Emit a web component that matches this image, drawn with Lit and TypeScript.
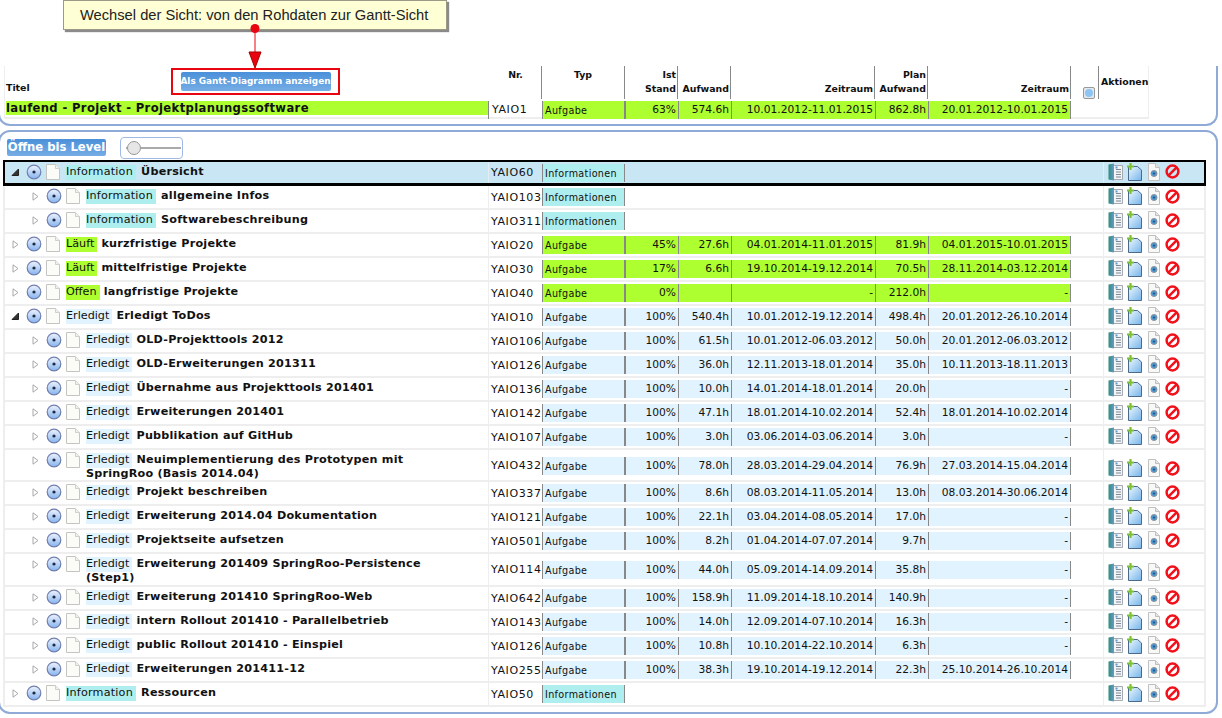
import { LitElement, html, css, svg } from 'lit';
import { customElement } from 'lit/decorators.js';

type Row = {
  lvl: number;
  open?: boolean;
  state: string;
  kind: 'info' | 'run' | 'done';
  title: string;
  nr: string;
  type: string;
  vals?: string[];
  sel?: boolean;
  h?: string;
};

const done = (title: string, nr: string, vals: string[], h = ''): Row => ({
  lvl: 1, state: 'Erledigt', kind: 'done', title, nr, type: 'Aufgabe', vals, h,
});

const rows: Row[] = [
  { lvl: 0, open: true, state: 'Information', kind: 'info', title: 'Übersicht', nr: 'YAIO60', type: 'Informationen', sel: true },
  { lvl: 1, state: 'Information', kind: 'info', title: 'allgemeine Infos', nr: 'YAIO103', type: 'Informationen' },
  { lvl: 1, state: 'Information', kind: 'info', title: 'Softwarebeschreibung', nr: 'YAIO311', type: 'Informationen' },
  { lvl: 0, state: 'Läuft', kind: 'run', title: 'kurzfristige Projekte', nr: 'YAIO20', type: 'Aufgabe', vals: ['45%', '27.6h', '04.01.2014-11.01.2015', '81.9h', '04.01.2015-10.01.2015'] },
  { lvl: 0, state: 'Läuft', kind: 'run', title: 'mittelfristige Projekte', nr: 'YAIO30', type: 'Aufgabe', vals: ['17%', '6.6h', '19.10.2014-19.12.2014', '70.5h', '28.11.2014-03.12.2014'] },
  { lvl: 0, state: 'Offen', kind: 'run', title: 'langfristige Projekte', nr: 'YAIO40', type: 'Aufgabe', vals: ['0%', '', '-', '212.0h', '-'] },
  { lvl: 0, open: true, state: 'Erledigt', kind: 'done', title: 'Erledigt ToDos', nr: 'YAIO10', type: 'Aufgabe', vals: ['100%', '540.4h', '10.01.2012-19.12.2014', '498.4h', '20.01.2012-26.10.2014'] },
  done('OLD-Projekttools 2012', 'YAIO106', ['100%', '61.5h', '10.01.2012-06.03.2012', '50.0h', '20.01.2012-06.03.2012']),
  done('OLD-Erweiterungen 201311', 'YAIO126', ['100%', '36.0h', '12.11.2013-18.01.2014', '35.0h', '10.11.2013-18.11.2013']),
  done('Übernahme aus Projekttools 201401', 'YAIO136', ['100%', '10.0h', '14.01.2014-18.01.2014', '20.0h', '-']),
  done('Erweiterungen 201401', 'YAIO142', ['100%', '47.1h', '18.01.2014-10.02.2014', '52.4h', '18.01.2014-10.02.2014']),
  done('Pubblikation auf GitHub', 'YAIO107', ['100%', '3.0h', '03.06.2014-03.06.2014', '3.0h', '-']),
  done('Neuimplementierung des Prototypen mit SpringRoo (Basis 2014.04)', 'YAIO432', ['100%', '78.0h', '28.03.2014-29.04.2014', '76.9h', '27.03.2014-15.04.2014'], 'tall'),
  done('Projekt beschreiben', 'YAIO337', ['100%', '8.6h', '08.03.2014-11.05.2014', '13.0h', '08.03.2014-30.06.2014']),
  done('Erweiterung 2014.04 Dokumentation', 'YAIO121', ['100%', '22.1h', '03.04.2014-08.05.2014', '17.0h', '-']),
  done('Projektseite aufsetzen', 'YAIO501', ['100%', '8.2h', '01.04.2014-07.07.2014', '9.7h', '-']),
  done('Erweiterung 201409 SpringRoo-Persistence (Step1)', 'YAIO114', ['100%', '44.0h', '05.09.2014-14.09.2014', '35.8h', '-'], 'taller'),
  done('Erweiterung 201410 SpringRoo-Web', 'YAIO642', ['100%', '158.9h', '11.09.2014-18.10.2014', '140.9h', '-']),
  done('intern Rollout 201410 - Parallelbetrieb', 'YAIO143', ['100%', '14.0h', '12.09.2014-07.10.2014', '16.3h', '-']),
  done('public Rollout 201410 - Einspiel', 'YAIO126', ['100%', '10.8h', '10.10.2014-22.10.2014', '6.3h', '-']),
  done('Erweiterungen 201411-12', 'YAIO255', ['100%', '38.3h', '19.10.2014-19.12.2014', '22.3h', '25.10.2014-26.10.2014']),
  { lvl: 0, state: 'Information', kind: 'info', title: 'Ressourcen', nr: 'YAIO50', type: 'Informationen' },
];

const defs = svg`
  <linearGradient id="rad" x1="0" y1="0" x2="0" y2="1">
    <stop offset="0" stop-color="#eef3fc"/><stop offset="1" stop-color="#86b4f0"/>
  </linearGradient>
  <linearGradient id="nw" x1="0" y1="0" x2="1" y2="1">
    <stop offset="0" stop-color="#eef7fe"/><stop offset="1" stop-color="#74b4ea"/>
  </linearGradient>
  <linearGradient id="spine" x1="0" y1="0" x2="1" y2="0">
    <stop offset="0" stop-color="#2f8f7e"/><stop offset="1" stop-color="#6a98c8"/>
  </linearGradient>`;

const triangle = (open?: boolean) => open
  ? html`<svg class="tri" viewBox="0 0 9 9"><path d="M1 7.5 7.5 7.5 7.5 1Z" fill="#333" stroke="#222"/></svg>`
  : html`<svg class="tri" viewBox="0 0 9 9"><path d="M2 .8 7 4.5 2 8.2Z" fill="#fff" stroke="#a8a8a8"/></svg>`;

const radio = html`<svg class="radio" viewBox="0 0 16 16">
  <defs>${defs}</defs>
  <circle cx="8" cy="8" r="6.8" fill="url(#rad)" stroke="#6f7fae" stroke-width="1.2"/>
  <circle cx="8" cy="8" r="1.6" fill="#1c2a44"/>
</svg>`;

const page = html`<svg class="page" viewBox="0 0 14 16">
  <path d="M.5.5H9.5L13.5 4.5V15.5H.5Z" fill="#fbfbf7" stroke="#c4c4c0"/>
  <path d="M9.5.5V4.5H13.5" fill="#f0f0ec" stroke="#d0d0cc"/>
</svg>`;

const actions = html`<div class="acts">
  <svg width="15" height="18" viewBox="0 0 15 18">
    <defs>${defs}</defs>
    <path d="M5 2.5H14.5V16.5H5Z" fill="#f2f4f6" stroke="#a4aab0"/>
    <path d="M.5 1.5 6 .5V17.5L.5 16.5Z" fill="url(#spine)"/>
    <path d="M8 6.5h5M8 9h5M8 11.5h5M8 14h5" stroke="#7d8894"/>
    <rect x="7.5" y="3.5" width="2" height="2" fill="#5b9bd8"/>
  </svg>
  <svg width="15" height="18" viewBox="0 0 15 18">
    <defs>${defs}</defs>
    <path d="M1.5 3.5H10.5L14.5 7V17.5H1.5Z" fill="url(#nw)" stroke="#4a6a8c"/>
    <path d="M3.5 0V7M0 3.5H7" stroke="#7dc230" stroke-width="2.2"/>
  </svg>
  <svg width="12" height="18" viewBox="0 0 12 18">
    <path d="M.5.5H7.5L11.5 4.5V17.5H.5Z" fill="#f8f8f6" stroke="#c0c0c0"/>
    <path d="M7.5.5V4.5H11.5" fill="#e4e4e4" stroke="#c0c0c0"/>
    <circle cx="6" cy="10.5" r="3" fill="#4a96d4" stroke="#8a929a"/>
    <circle cx="6" cy="10.5" r="1" fill="#1d4f7c"/>
  </svg>
  <svg width="15" height="15" viewBox="0 0 15 15" class="stop">
    <circle cx="7.5" cy="7.5" r="5.9" fill="none" stroke="#f2101a" stroke-width="2.5"/>
    <path d="M3.4 11.6 11.6 3.4" stroke="#f2101a" stroke-width="2.5"/>
  </svg>
</div>`;

@customElement('app-root')
class AppRoot extends LitElement {
  static styles = css`
    :host {
      display: block;
      position: relative;
      width: 1222px;
      height: 718px;
      background: #fff;
      font-family: 'DejaVu Sans', Verdana, sans-serif;
      font-size: 10.7px;
      color: #111;
      overflow: hidden;
    }
    .panel {
      box-sizing: border-box;
      width: 1220px;
      margin-left: -2px;
      border: 2px solid #8faad6;
      background: #fff;
    }
    .top {
      height: 60px;
      margin-top: 66px;
      padding: 0 0 0 4px;
      border-top: 0;
      border-radius: 0 0 12px 12px;
      margin-bottom: 4px;
    }
    .main {
      height: 584px;
      padding: 0 0 0 4px;
      border-radius: 12px;
    }
    .sumbox {
      box-sizing: border-box;
      width: 1145px;
      height: 53px;
      border: solid #eee;
      border-width: 0 1px 2px 1px;
    }
    .grid {
      display: grid;
      grid-template-columns: 483px 54px 83px 53px 53px 144px 53px 143px 28px 48px;
    }
    .head {
      height: 30px;
      font-weight: bold;
      font-size: 9.4px;
      line-height: 14px;
      margin-bottom: 5px;
    }
    .hc {
      box-sizing: border-box;
      padding: 0 1px 3px 0;
      text-align: right;
      border-right: 1px solid #888;
      display: flex;
      flex-direction: column;
      justify-content: flex-end;
    }
    .hc.title {
      position: relative;
      text-align: left;
      padding: 0 0 4px 1px;
      border-right: 0;
    }
    .hc.hnr { justify-content: flex-start; text-align: center; padding: 2px 0 0 2px; }
    .hc.htype { justify-content: flex-start; text-align: center; padding: 2px 0 0; }
    .hc.minus { height: 33px; padding: 0 0 0 12px; }
    .hc.aktionen { border-right: 0; text-align: left; padding: 9px 0 0 2px; justify-content: flex-start; }
    .gantt {
      position: absolute;
      left: 166px;
      top: 2px;
      width: 169px;
      height: 27px;
      box-sizing: border-box;
      border: 2px solid #e8050f;
      display: flex;
      align-items: center;
      justify-content: center;
    }
    .btn {
      display: block;
      color: #fff;
      font-weight: bold;
      border-radius: 2px;
      background: linear-gradient(#4a90d9, #76ade5);
      white-space: nowrap;
    }
    .gantt .btn { font-size: 8.9px; line-height: 19px; width: 150px; text-align: center; }
    .minus-ic {
      width: 12px;
      height: 12px;
      box-sizing: border-box;
      border: 1px solid #999;
      border-radius: 2px;
      background: #e4e8ec;
      display: flex;
      align-items: center;
      justify-content: center;
    }
    .minus-ic i { display: block; height: 8px; width: 8px; border-radius: 50%; background: #8cc4f4; }
    .sumtitle {
      background: #adff2f;
      height: 14px;
      margin-left: 1px;
      font-weight: bold;
      font-size: 11.6px;
      line-height: 14px;
      letter-spacing: .36px;
      white-space: nowrap;
    }
    .sum .nr { border-left: 1px solid #888; padding-left: 3px; padding-bottom: 1px; }

    .toolbar {
      height: 28px;
      box-sizing: border-box;
      display: flex;
      align-items: center;
      padding: 3px 0 0 3px;
    }
    .toolbar .btn { font-size: 11.6px; line-height: 17px; width: 99px; text-align: center; }
    .slider {
      box-sizing: border-box;
      width: 63px;
      height: 22px;
      margin-left: 14px;
      border: 1px solid #9fbbe3;
      border-radius: 4px;
      display: flex;
      align-items: center;
      padding-left: 5px;
      position: relative;
    }
    .slider::before { content: ''; flex: 1; height: 2px; background: #aaa; margin-right: 1px; }
    .slider i {
      position: absolute;
      left: 6px;
      top: 3px;
      width: 14px;
      height: 14px;
      box-sizing: border-box;
      border-radius: 50%;
      border: 1px solid #999;
      background: #e6e6e6;
    }

    .row {
      box-sizing: border-box;
      height: 24px;
      margin-left: -1px;
      border-bottom: 2px solid #eee;
      border-left: 2px solid #eee;
      border-right: 2px solid #eee;
      width: 1203px;
      grid-template-columns: 483px 54px 83px 53px 53px 144px 53px 143px 32px 99px;
    }
    .row.tall { height: 32px; }
    .row.taller { height: 33px; }
    .row.sel {
      height: 26px;
      background: #c9e6f4;
      border: 2px solid #000;
      border-bottom-width: 3px;
    }
    .t {
      display: flex;
      align-items: flex-start;
      padding: 3px 25px 0 0;
      line-height: 14px;
    }
    .ctl { display: flex; align-items: flex-start; flex: none; margin-top: -2px; box-sizing: border-box; }
    .lvl0 .ctl { width: 61px; padding-left: 6px; }
    .lvl1 .ctl { width: 81px; padding-left: 26px; }
    .tri { width: 9px; height: 9px; margin: 5px 6px 0 0; flex: none; }
    .radio { width: 16px; height: 16px; margin: 1px 4px 0 0; flex: none; }
    .page { width: 14px; height: 16px; flex: none; margin-top: 1px; }
    .txt { font-weight: bold; font-size: 11.2px; letter-spacing: .22px; }
    .info { --tone: #afeeee; }
    .run { --tone: #adff2f; }
    .done { --tone: #e0f3fe; }
    .badge {
      font-weight: normal;
      font-size: 11.2px;
      letter-spacing: 0;
      padding-right: 3px;
      display: inline-block;
      line-height: 14px;
      background: var(--tone);
      box-shadow: 0 1px 0 var(--tone);
    }
    .info .badge { letter-spacing: .2px; margin-right: 1px; }
    .band { background: var(--tone); }
    .c { display: flex; align-items: center; min-width: 0; }
    .nr { padding-left: 2px; white-space: nowrap; font-size: 11px; letter-spacing: .6px; }
    .row .nr { border-left: 1px solid #eee; }
    .sel .nr { border-left-color: #e3eef4; }
    .band {
      box-sizing: border-box;
      width: 100%;
      height: 18px;
      border-left: 1px solid #888;
      line-height: 18px;
      text-align: right;
      padding-right: 2px;
      white-space: nowrap;
    }
    .band.ty {
      text-align: left;
      padding: 1px 0 0 2px;
      font-size: 9.6px;
      letter-spacing: .34px;
      border-right: 1px solid #888;
    }
    .band.last { border-right: 1px solid #888; }
    .acts {
      display: flex;
      align-items: center;
      gap: 4px;
      padding: 0 0 2px 4px;
      height: 100%;
      border-left: 1px solid #eee;
      box-sizing: border-box;
      width: 100%;
    }
    .tall .acts, .taller .acts { padding: 5px 0 0 4px; }
    .acts svg { flex: none; }
    .acts svg:nth-child(3) { margin-left: 2px; }
    .acts svg:nth-child(4) { margin-left: 1px; }
    .sel .acts { border-left-color: #e3eef4; }

    .callout {
      position: absolute;
      left: 63px;
      top: 0;
      width: 384px;
      height: 30px;
      box-sizing: border-box;
      background: #ffffd5;
      border: 1px solid #9a9a86;
      box-shadow: 2px 2px 1px #8a8a8a;
      font-family: 'Liberation Sans', Arial, sans-serif;
      font-size: 14.7px;
      line-height: 29px;
      color: #222;
      padding-left: 16px;
      white-space: nowrap;
    }
    .arrow { position: absolute; left: 245px; top: 20px; width: 20px; height: 50px; }
  `;

  private renderHead() {
    return html`<div class="grid head">
      <div class="hc title">
        <span>Titel</span>
        <div class="gantt"><span class="btn">Als Gantt-Diagramm anzeigen</span></div>
      </div>
      <div class="hc hnr">Nr.</div>
      <div class="hc htype">Typ</div>
      <div class="hc">Ist<br />Stand</div>
      <div class="hc">Aufwand</div>
      <div class="hc">Zeitraum</div>
      <div class="hc">Plan<br />Aufwand</div>
      <div class="hc">Zeitraum</div>
      <div class="hc minus"><span class="minus-ic"><i></i></span></div>
      <div class="hc aktionen">Aktionen</div>
    </div>`;
  }

  private renderValues(vals?: string[]) {
    if (!vals) return html`<div></div><div></div><div></div><div></div><div></div>`;
    return vals.map(
      (v, i) => html`<div class="c"><div class="band ${i === 4 ? 'last' : ''}">${v}</div></div>`,
    );
  }

  private renderRow(r: Row) {
    return html`<div class="grid row ${r.kind} ${r.sel ? 'sel' : ''} ${r.h ?? ''}">
      <div class="t lvl${r.lvl}">
        <div class="ctl">${triangle(r.open)}${radio}${page}</div>
        <div class="txt"><span class="badge">${r.state}</span> ${r.title}</div>
      </div>
      <div class="c nr">${r.nr}</div>
      <div class="c"><div class="band ty">${r.type}</div></div>
      ${this.renderValues(r.vals)}
      <div></div>
      <div class="c">${actions}</div>
    </div>`;
  }

  render() {
    return html`
      <div class="panel top">
        <div class="sumbox">
          ${this.renderHead()}
          <div class="grid sum run">
            <div class="sumtitle">laufend - Projekt - Projektplanungssoftware</div>
            <div class="c nr">YAIO1</div>
            <div class="c"><div class="band ty">Aufgabe</div></div>
            ${['63%', '574.6h', '10.01.2012-11.01.2015', '862.8h', '20.01.2012-10.01.2015'].map(
              (v, i) => html`<div class="c"><div class="band ${i === 4 ? 'last' : ''}">${v}</div></div>`,
            )}
          </div>
        </div>
      </div>
      <div class="panel main">
        <div class="toolbar">
          <span class="btn">Öffne bis Level</span>
          <div class="slider"><i></i></div>
        </div>
        <div>${rows.map((r) => this.renderRow(r))}</div>
      </div>
      <div class="callout">Wechsel der Sicht: von den Rohdaten zur Gantt-Sicht</div>
      <svg class="arrow" viewBox="0 0 20 50">
        <circle cx="10" cy="8.5" r="4.5" fill="#e8050f"/>
        <path d="M10 9V34" stroke="#e8050f"/>
        <path d="M4 32H16L10 48Z" fill="#e8050f" stroke="#a00"/>
      </svg>
    `;
  }
}
